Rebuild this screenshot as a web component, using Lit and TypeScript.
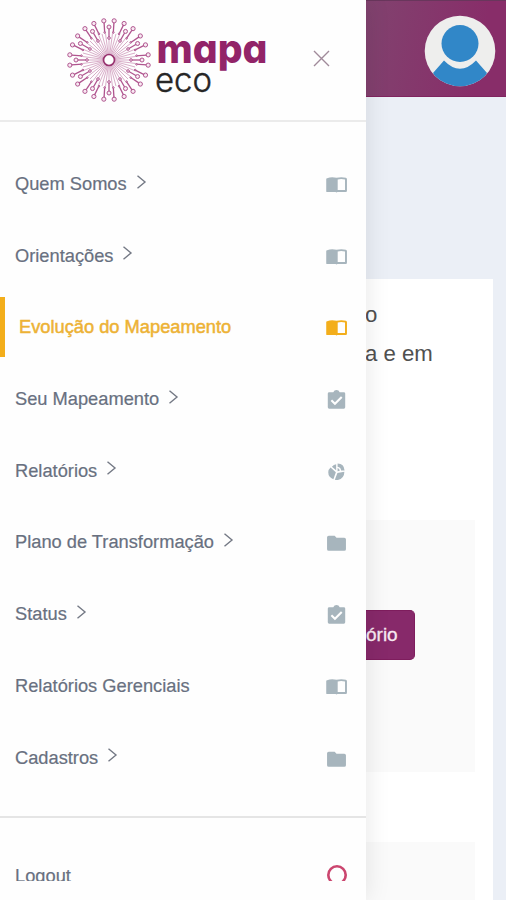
import { LitElement, html, svg, css } from "lit";
import { customElement } from "lit/decorators.js";
import { classMap } from "lit/directives/class-map.js";

type IconName = "book" | "task" | "pie" | "folder";

interface Item {
  label: string;
  icon: IconName;
  more?: boolean;
  active?: boolean;
}

const ITEMS: Item[] = [
  { label: "Quem Somos", icon: "book", more: true },
  { label: "Orientações", icon: "book", more: true },
  { label: "Evolução do Mapeamento", icon: "book", active: true },
  { label: "Seu Mapeamento", icon: "task", more: true },
  { label: "Relatórios", icon: "pie", more: true },
  { label: "Plano de Transformação", icon: "folder", more: true },
  { label: "Status", icon: "task", more: true },
  { label: "Relatórios Gerenciais", icon: "book" },
  { label: "Cadastros", icon: "folder", more: true },
];

const ICONS = {
  book: svg`<path fill-rule="evenodd" d="M1.800 4.600Q6.500 2.900 12 4.200Q17.500 2.900 22.200 4.200Q23.400 4.500 23.400 5.600V18.400Q23.400 19.700 22.200 19.700H13L12 20.200L11 19.700H1.800Q.8 19.700 .8 18.700V5.500Q.8 4.900 1.800 4.600ZM13.300 6V17.500H21.300V6Q17 4.900 13.300 6Z"/>`,
  task: svg`<path fill-rule="evenodd" d="M4 3.500H8.500Q9.500 1 12 1T15.500 3.500H20Q21.500 3.500 21.500 5V20Q21.500 21.500 20 21.500H4Q2.500 21.500 2.500 20V5Q2.500 3.500 4 3.500ZM10.300 17.700L18.500 9.500L16.900 7.900L10.300 14.500L7.200 11.400L5.600 13Z"/>`,
  pie: svg`<path d="M11.600 3.600V10.200L7 6.300Q9 4 11.600 3.600ZM13.200 2.800Q20.300 3 20.800 10.300H17Q16.800 7 13.200 6.300ZM5.500 7.200L11.300 12.300L8.600 19.800Q3 17.800 3 12.300Q3.200 9.200 5.500 7.200ZM13 13.200L20.600 11.800Q20.500 19.200 13.500 20.700Q11.700 21 10.200 20.500ZM13.200 7.700Q15.300 8.300 15.600 10.700L13.200 11.300Z"/>`,
  folder: svg`<path d="M3.500 4H10L12 6.200H20.500Q22.300 6.200 22.300 8V18.800Q22.300 20.500 20.500 20.500H3.500Q1.700 20.500 1.700 18.800V5.800Q1.700 4 3.500 4Z"/>`,
};

const polar = (deg: number, r: number) => {
  const a = (deg * Math.PI) / 180;
  return [42 + r * Math.sin(a), 42 - r * Math.cos(a)];
};

const stroke = (a: number[], b: number[], faint = false) =>
  svg`<line class=${faint ? "faint" : "ray"} x1=${a[0]} y1=${a[1]} x2=${b[0]} y2=${b[1]}></line>`;
const dot = (p: number[], r: number) =>
  svg`<circle cx=${p[0]} cy=${p[1]} r=${r}></circle>`;

const BURST = Array.from({ length: 12 }, (_, i) => {
  const straight = i * 30;
  const fork = straight + 15;
  return svg`
    ${stroke(polar(straight, 6), polar(straight, 21), true)}
    ${stroke(polar(straight, 21), polar(straight, 32))}
    ${stroke(polar(fork, 6), polar(fork, 27), true)}
    ${stroke(polar(straight + 7.5, 6), polar(straight + 7.5, 27), true)}
    ${stroke(polar(straight - 7.5, 6), polar(straight - 7.5, 27), true)}
    ${stroke(polar(straight + 9, 27), polar(straight + 7.5, 38))}
    ${stroke(polar(straight - 9, 27), polar(straight - 7.5, 38))}
    ${dot(polar(straight, 22), 1.3)}
    ${dot(polar(straight, 33), 2)}
    ${dot(polar(straight + 9, 28), 0.8)}
    ${dot(polar(straight - 9, 28), 0.8)}
    ${dot(polar(fork - 7.5, 39.5), 2.1)}
    ${dot(polar(fork + 7.5, 39.5), 2.1)}`;
});

@customElement("app-root")
export class AppRoot extends LitElement {
  static styles = css`
    :host {
      display: flex;
      position: relative;
      width: 100%;
      height: 900px;
      overflow: hidden;
      background: #ebeff6;
      font-family: "Liberation Sans", Arial, sans-serif;
    }
    * { box-sizing: border-box; }
    svg { display: block; }
    .drawer {
      flex: none;
      width: 366px;
      height: 900px;
      background: #fefefe;
      box-shadow: 0 0 24px rgba(0, 0, 0, 0.1);
      z-index: 1;
      display: flex;
      flex-direction: column;
    }
    .brand {
      height: 122px;
      flex: none;
      border-bottom: 2px solid #ebebeb;
      padding: 18px 35px 0 67px;
      display: flex;
      align-items: flex-start;
      justify-content: space-between;
    }
    .burst { fill: #f8e9f2; stroke: #b0558f; stroke-width: 1; }
    .ray { stroke: #b0558f; stroke-width: 1.3; }
    .faint { stroke: #c98bb2; stroke-width: 0.7; }
    .hub { fill: #fefefe; stroke: #98326f; stroke-width: 1.7; }
    .mapa { font: 800 40px Inter, sans-serif; font-feature-settings: "cv11"; fill: #922468; }
    .eco { font: 300 34px Inter, sans-serif; fill: #262626; stroke: #262626; stroke-width: 0.4; }
    .close { margin-top: 32px; stroke: #a08a9a; stroke-width: 1.4; fill: none; }
    .menu {
      flex: none;
      height: 696px;
      border-bottom: 2px solid #e5e5e5;
      padding-top: 31.500px;
      display: flex;
      flex-direction: column;
      gap: 11.700px;
    }
    .item {
      flex: none;
      height: 60px;
      padding: 0 18px 0 15px;
      display: flex;
      align-items: center;
      color: #687080;
      font-size: 18.270px;
      line-height: 24px;
      white-space: nowrap;
    }
    .label { flex: none; margin-top: 1px; -webkit-text-stroke: 0.2px currentColor; }
    .active { border-left: 5px solid #f3ae1b; padding-left: 14px; color: #edb235; }
    .active .label { -webkit-text-stroke: 0.5px currentColor; }
    .chevron { margin: -4px 0 0 9px; fill: none; stroke: #747985; stroke-width: 1.4; }
    .icon { margin: 3px 0 0 auto; fill: #a7b5bd; }
    .active .icon { fill: #f3ae1b; }
    .foot { height: 63px; overflow: hidden; padding-top: 27.400px; }
    .ring { margin: -1px 0 0 auto; fill: none; stroke: #cb466f; stroke-width: 2.600; }
    .page { flex: 1; min-width: 0; display: flex; flex-direction: column; }
    .top {
      flex: none;
      height: 97px;
      border-top: 1px solid #69365c;
      border-bottom: 1px solid #80245f;
      background: linear-gradient(100deg, #81436f, #882d69 80%);
      display: flex;
      justify-content: flex-end;
      padding: 14px 10px 0 0;
    }
    .card {
      flex: none;
      margin: 182px 13px 0 0;
      height: 621px;
      background: #fff;
      padding-top: 16px;
      display: flex;
      flex-direction: column;
    }
    .copy { flex: none; margin: 0 0 0 -1px; height: 225px; font-size: 22.200px; line-height: 39px; color: #505050; white-space: nowrap; }
    .panel {
      flex: none;
      width: 109px;
      height: 252px;
      margin-bottom: 70px;
      background: #fafafa;
      display: flex;
      align-items: center;
    }
    .button {
      width: 49px;
      height: 50px;
      margin-top: -22px;
      border: 1px solid #7e1d5d;
      border-left: 0;
      border-radius: 0 5px 5px 0;
      background: #87296a;
      color: #f7e9f2;
      font: 19px/47px "Liberation Sans", Arial, sans-serif;
      -webkit-text-stroke: 0.3px currentColor;
    }
  `;

  private item(it: Item) {
    return html`<div class=${classMap({ item: true, active: !!it.active })}>
      <span class="label">${it.label}</span>
      ${it.more
        ? html`<svg class="chevron" width="12" height="16" viewBox="0 0 12 16"><path d="M1.500 1.800L9 8L1.500 14.200" /></svg>`
        : ""}
      <svg class="icon" width="23" height="22" viewBox="0 0 24 24">${ICONS[it.icon]}</svg>
    </div>`;
  }

  render() {
    return html`
      <nav class="drawer">
        <div class="brand">
          <svg width="204" height="86" viewBox="0 0 204 86">
            <g class="burst">${BURST}<circle class="hub" cx="42" cy="42" r="5.500" /></g>
            <text class="mapa" x="89.500" y="45" textLength="111" lengthAdjust="spacingAndGlyphs">mapa</text>
            <text class="eco" x="88" y="73.500" textLength="57" lengthAdjust="spacingAndGlyphs">eco</text>
          </svg>
          <svg class="close" width="19" height="19" viewBox="0 0 19 19"><path d="M2 1L17 16M17 1L2 16" /></svg>
        </div>
        <div class="menu">${ITEMS.map((it) => this.item(it))}</div>
        <div class="foot">
          <div class="item">
            <span class="label">Logout</span>
            <svg class="ring" width="22" height="22" viewBox="0 0 22 22"><circle cx="11" cy="11" r="8.700" /></svg>
          </div>
        </div>
      </nav>
      <main class="page">
        <header class="top">
          <svg width="72" height="72" viewBox="0 0 72 72">
            <defs><clipPath id="disc"><circle cx="36" cy="36" r="35.300" /></clipPath></defs>
            <circle cx="36" cy="36" r="35.300" fill="#eeeeed" />
            <g clip-path="url(#disc)">
              <path d="M9 58L20 45.500Q36 62 52 45.500L63 58L55 72H17Z" fill="#3187c8" />
            </g>
            <circle cx="36" cy="28.500" r="18.500" fill="#3187c8" />
          </svg>
        </header>
        <section class="card">
          <div class="copy">o<br />a e em</div>
          <div class="panel"><div class="button">ório</div></div>
          <div class="panel"></div>
        </section>
      </main>
    `;
  }
}
